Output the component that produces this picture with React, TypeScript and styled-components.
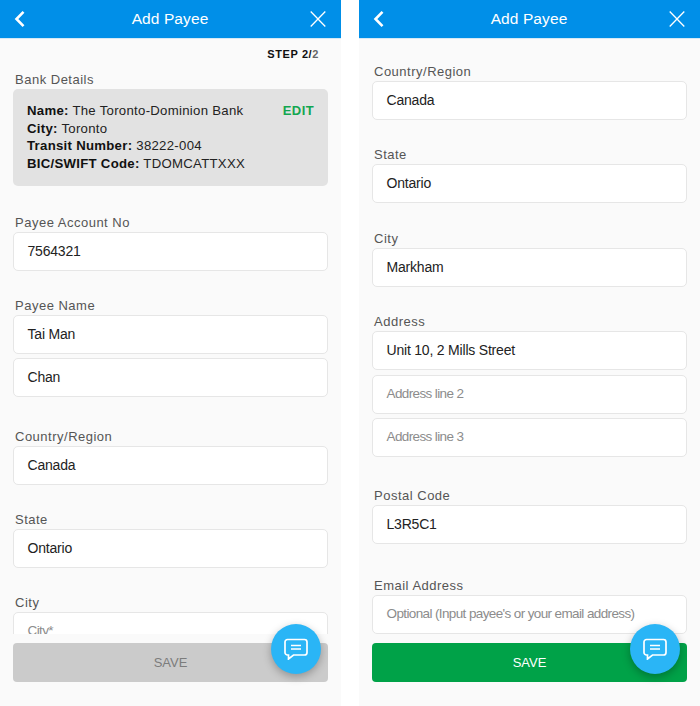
import React from "react";
import styled, { createGlobalStyle } from "styled-components";

const Global = createGlobalStyle`
  html, body { margin: 0; padding: 0; background: #fff; }
  body { font-family: "Liberation Sans", Arial, sans-serif; }
`;

const Page = styled.div`
  display: flex;
  gap: 18px;
  width: 700px;
  height: 706px;
`;

const Phone = styled.section`
  position: relative;
  display: flex;
  flex-direction: column;
  width: 341px;
  height: 706px;
  background: #fafafa;
  overflow: hidden;
`;

const Header = styled.header`
  flex: none;
  display: flex;
  align-items: center;
  justify-content: space-between;
  height: 38px;
  padding: 0 15px 0 14px;
  background: #008fe8;
  border-bottom: 1px solid #d4e9f6;
`;

const Title = styled.h1`
  margin: 0;
  font-size: 15.5px;
  font-weight: 400;
  letter-spacing: 0.1px;
  color: #fff;
`;

const HeaderIcon = styled.svg`
  display: block;
  width: 16px;
  height: 18px;
  fill: none;
  stroke: #fff;
`;

const Body = styled.div`
  flex: 1;
  min-height: 0;
  overflow: hidden;
  padding: 0 13px;
`;

const Step = styled.div`
  margin-top: 8px;
  height: 14px;
  line-height: 14px;
  padding-right: 9px;
  text-align: right;
  font-size: 11px;
  font-weight: 700;
  letter-spacing: 0.6px;
  color: #111;
  & > span { color: #666; }
`;

const Group = styled.div<{ $top: number }>`
  margin-top: ${(p) => p.$top}px;
`;

const Label = styled.div`
  height: 16px;
  line-height: 18px;
  margin-bottom: 2px;
  padding-left: 2px;
  font-size: 13px;
  letter-spacing: 0.5px;
  color: #555;
`;

const Input = styled.div<{ $gap?: number }>`
  display: flex;
  align-items: center;
  box-sizing: border-box;
  height: 39px;
  margin-top: ${(p) => p.$gap ?? 0}px;
  padding: 0 0 2px 13.5px;
  background: #fff;
  border: 1px solid #e6e6e6;
  border-radius: 5px;
  font-size: 14px;
  letter-spacing: -0.2px;
  color: #222;
`;

const Placeholder = styled.span`
  font-size: 13.5px;
  letter-spacing: -0.62px;
  color: #8c8c8c;
`;

const Card = styled.div`
  position: relative;
  box-sizing: border-box;
  height: 97px;
  padding: 13px 14px;
  background: #e2e2e2;
  border-radius: 5px;
  font-size: 13.2px;
  line-height: 17.6px;
  letter-spacing: 0.28px;
  color: #222;
  & b { font-weight: 700; color: #111; }
`;

const Edit = styled.span`
  position: absolute;
  top: 13px;
  right: 14px;
  font-size: 13px;
  font-weight: 700;
  letter-spacing: 0.4px;
  color: #12a650;
`;

const Footer = styled.div`
  flex: none;
  box-sizing: border-box;
  height: 72px;
  padding: 9px 13px 0;
  background: #fafafa;
`;

const SaveButton = styled.button<{ $active: boolean }>`
  display: block;
  width: 100%;
  height: 39px;
  padding: 0;
  border: 0;
  border-radius: 4px;
  background: ${(p) => (p.$active ? "#00a248" : "#cbcbcb")};
  color: ${(p) => (p.$active ? "#fff" : "#7c7c7c")};
  font: 400 13px "Liberation Sans", Arial, sans-serif;
`;

const Fab = styled.div`
  position: absolute;
  left: 271px;
  top: 624px;
  display: flex;
  align-items: center;
  justify-content: center;
  width: 50px;
  height: 50px;
  border-radius: 50%;
  background: #2ab5f6;
  box-shadow: 0 3px 8px rgba(0, 0, 0, 0.28);
`;

const FabIcon = styled.svg`
  display: block;
  width: 24px;
  height: 22px;
  fill: none;
  stroke: #fff;
  stroke-width: 1.7;
`;

const Back = () => (
  <HeaderIcon viewBox="0 0 16 18">
    <path d="M9.5 1.8 2.5 9l7 7.2" strokeWidth="2.6" />
  </HeaderIcon>
);

const Close = () => (
  <HeaderIcon viewBox="0 0 16 18">
    <path d="M.7 1.5 15.3 16.5M15.3 1.5.7 16.5" strokeWidth="1.3" />
  </HeaderIcon>
);

const Chat = () => (
  <Fab>
    <FabIcon viewBox="0 0 24 22">
      <path d="M3.5 1.5h17A2.5 2.5 0 0 1 23 4v10.5a2.5 2.5 0 0 1-2.5 2.5H9.5L4.5 21v-4h-1A2.5 2.5 0 0 1 1 14.5V4a2.5 2.5 0 0 1 2.5-2.5Z" />
      <path d="M7 7.5h10M7 11h10" />
    </FabIcon>
  </Fab>
);

const Screen = ({ active, children }: { active: boolean; children: React.ReactNode }) => (
  <Phone>
    <Header>
      <Back />
      <Title>Add Payee</Title>
      <Close />
    </Header>
    <Body>{children}</Body>
    <Footer>
      <SaveButton $active={active}>SAVE</SaveButton>
    </Footer>
    <Chat />
  </Phone>
);

export default function App() {
  return (
    <Page>
      <Global />
      <Screen active={false}>
        <Step>
          STEP 2/<span>2</span>
        </Step>
        <Group $top={10}>
          <Label>Bank Details</Label>
          <Card>
            <Edit>EDIT</Edit>
            <b>Name:</b> The Toronto-Dominion Bank
            <br />
            <b>City:</b> Toronto
            <br />
            <b>Transit Number:</b> 38222-004
            <br />
            <b>BIC/SWIFT Code:</b> TDOMCATTXXX
          </Card>
        </Group>
        <Group $top={28}>
          <Label>Payee Account No</Label>
          <Input>7564321</Input>
        </Group>
        <Group $top={26}>
          <Label>Payee Name</Label>
          <Input>Tai Man</Input>
          <Input $gap={4}>Chan</Input>
        </Group>
        <Group $top={31}>
          <Label>Country/Region</Label>
          <Input>Canada</Input>
        </Group>
        <Group $top={26}>
          <Label>State</Label>
          <Input>Ontario</Input>
        </Group>
        <Group $top={26}>
          <Label>City</Label>
          <Input>
            <Placeholder>City*</Placeholder>
          </Input>
        </Group>
      </Screen>
      <Screen active>
        <Group $top={24}>
          <Label>Country/Region</Label>
          <Input>Canada</Input>
        </Group>
        <Group $top={26}>
          <Label>State</Label>
          <Input>Ontario</Input>
        </Group>
        <Group $top={27}>
          <Label>City</Label>
          <Input>Markham</Input>
        </Group>
        <Group $top={26}>
          <Label>Address</Label>
          <Input>Unit 10, 2 Mills Street</Input>
          <Input $gap={5}>
            <Placeholder>Address line 2</Placeholder>
          </Input>
          <Input $gap={4}>
            <Placeholder>Address line 3</Placeholder>
          </Input>
        </Group>
        <Group $top={30}>
          <Label>Postal Code</Label>
          <Input>L3R5C1</Input>
        </Group>
        <Group $top={33}>
          <Label>Email Address</Label>
          <Input>
            <Placeholder>Optional (Input payee's or your email address)</Placeholder>
          </Input>
        </Group>
      </Screen>
    </Page>
  );
}
